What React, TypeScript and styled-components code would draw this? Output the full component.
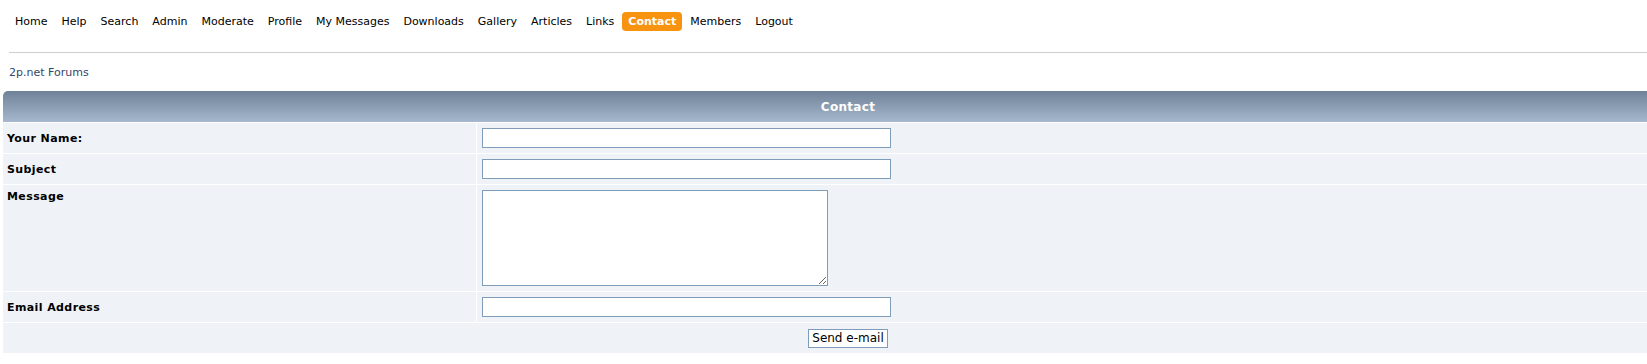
import styled, { createGlobalStyle } from "styled-components";

const GlobalStyle = createGlobalStyle`
  html, body {
    margin: 0;
    padding: 0;
    background: #ffffff;
    overflow: hidden;
  }
  body {
    font-family: "DejaVu Sans", Verdana, sans-serif;
    font-size: 11px;
    color: #000;
  }
`;

const menuItems = [
  "Home",
  "Help",
  "Search",
  "Admin",
  "Moderate",
  "Profile",
  "My Messages",
  "Downloads",
  "Gallery",
  "Articles",
  "Links",
  "Contact",
  "Members",
  "Logout",
];

function App() {
  return (
    <Page>
      <GlobalStyle />
      <Menu>
        {menuItems.map((item) => (
          <MenuItem key={item} $active={item === "Contact"}>
            {item}
          </MenuItem>
        ))}
      </Menu>
      <Divider />
      <Breadcrumb>2p.net Forums</Breadcrumb>
      <FormTable>
        <TitleBar>Contact</TitleBar>
        <LabelCell>Your Name:</LabelCell>
        <FieldCell>
          <TextInput type="text" />
        </FieldCell>
        <LabelCell>Subject</LabelCell>
        <FieldCell>
          <TextInput type="text" />
        </FieldCell>
        <LabelCell $top>Message</LabelCell>
        <FieldCell $top>
          <MessageBox />
        </FieldCell>
        <LabelCell>Email Address</LabelCell>
        <FieldCell>
          <TextInput type="text" />
        </FieldCell>
        <FooterCell>
          <SendButton type="button">Send e-mail</SendButton>
        </FooterCell>
      </FormTable>
    </Page>
  );
}

export default App;

const Page = styled.div`
  display: flex;
  flex-direction: column;
  width: 1647px;
`;

const Menu = styled.nav`
  display: flex;
  gap: 2px;
  padding: 12px 0 0 9px;
`;

const MenuItem = styled.a<{ $active?: boolean }>`
  display: block;
  height: 19px;
  line-height: 19px;
  padding: 0 6px;
  border-radius: 4px;
  color: ${(p) => (p.$active ? "#ffffff" : "#000000")};
  background: ${(p) => (p.$active ? "#f7930f" : "transparent")};
  font-weight: ${(p) => (p.$active ? "bold" : "normal")};
  white-space: nowrap;
  cursor: pointer;
`;

const Divider = styled.div`
  height: 1px;
  margin: 21px 0 0 9px;
  background: #cfcfcf;
`;

const Breadcrumb = styled.a`
  display: block;
  margin: 13px 0 0 9px;
  line-height: 13px;
  color: #34466a;
`;

const FormTable = styled.div`
  display: grid;
  grid-template-columns: 473px 1fr;
  grid-template-rows: 31px 30px 30px 106px 30px 30px;
  gap: 1px;
  width: 1690px;
  margin: 12px 0 0 3px;
  background: #ffffff;
`;

const TitleBar = styled.div`
  grid-column: 1 / -1;
  display: flex;
  align-items: center;
  justify-content: center;
  border-radius: 5px 5px 0 0;
  background: linear-gradient(to bottom, #6f8298 0%, #a6b8cd 100%);
  color: #ffffff;
  font-size: 12px;
  font-weight: bold;
  letter-spacing: 0.3px;
`;

const LabelCell = styled.div<{ $top?: boolean }>`
  display: flex;
  align-items: ${(p) => (p.$top ? "flex-start" : "center")};
  padding: ${(p) => (p.$top ? "5px 4px 0" : "0 4px")};
  background: #eff3f7;
  font-weight: bold;
  letter-spacing: 0.4px;
  line-height: 13px;
`;

const FieldCell = styled.div<{ $top?: boolean }>`
  display: flex;
  align-items: ${(p) => (p.$top ? "flex-start" : "center")};
  padding: ${(p) => (p.$top ? "5px 5px 0" : "0 5px")};
  background: #eff3f7;
`;

const TextInput = styled.input`
  box-sizing: border-box;
  width: 409px;
  height: 20px;
  margin: 0;
  border: 1px solid #7f9db9;
  background: #ffffff;
  font-family: "DejaVu Sans", Verdana, sans-serif;
  font-size: 11px;
  padding: 1px 3px;
  outline: none;
`;

const MessageBox = styled.textarea`
  box-sizing: border-box;
  width: 346px;
  height: 96px;
  margin: 0;
  border: 1px solid #7f9db9;
  background: #ffffff;
  font-family: "DejaVu Sans", Verdana, sans-serif;
  font-size: 11px;
  resize: both;
  outline: none;
`;

const FooterCell = styled.div`
  grid-column: 1 / -1;
  display: flex;
  align-items: center;
  justify-content: center;
  background: #eff3f7;
`;

const SendButton = styled.button`
  box-sizing: border-box;
  height: 19px;
  padding: 0 3px;
  margin: 0;
  border: 1px solid #7f9db9;
  background: #ffffff;
  color: #000000;
  font-family: "DejaVu Sans", Verdana, sans-serif;
  font-size: 12px;
  line-height: 16px;
  cursor: pointer;
`;
